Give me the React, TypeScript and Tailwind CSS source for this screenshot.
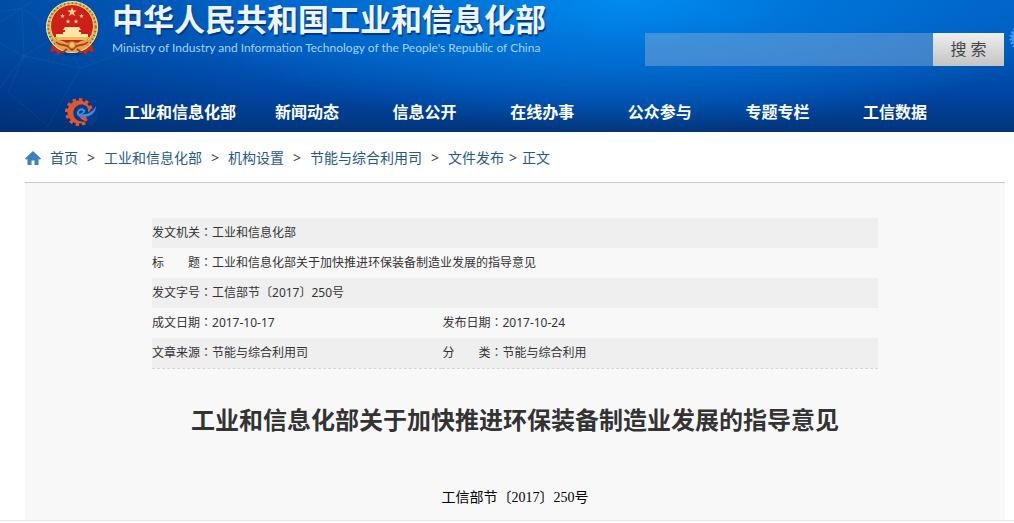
import { useState } from 'react'

const NAV_ITEMS = ['新闻动态', '信息公开', '在线办事', '公众参与', '专题专栏', '工信数据']

const CRUMBS = ['首页', '工业和信息化部', '机构设置', '节能与综合利用司', '文件发布']

interface MetaField {
  label: string
  value: string
}

const META_ROWS: MetaField[][] = [
  [{ label: '发文机关', value: '工业和信息化部' }],
  [{ label: '标　　题', value: '工业和信息化部关于加快推进环保装备制造业发展的指导意见' }],
  [{ label: '发文字号', value: '工信部节〔2017〕250号' }],
  [
    { label: '成文日期', value: '2017-10-17' },
    { label: '发布日期', value: '2017-10-24' },
  ],
  [
    { label: '文章来源', value: '节能与综合利用司' },
    { label: '分　　类', value: '节能与综合利用' },
  ],
]

const STAR = 'M0-1 .24-.31 .95-.31 .38.12 .59.81 0 .4-.59.81-.38.12-.95-.31-.24-.31Z'

function Emblem() {
  return (
    <svg viewBox="0 0 54 58" className="h-[58px] w-[54px] shrink-0" aria-hidden="true">
      <ellipse cx="27" cy="29" rx="26" ry="27" fill="#002f78" opacity=".45" />
      <path d="M8 42 5 52l6-1 2 4 7-6h14l7 6 2-4 6 1-3-10Z" fill="#c3271b" />
      <circle cx="27" cy="27" r="26" fill="#d8b45c" />
      <circle cx="27" cy="27" r="24" fill="none" stroke="#8f6a24" strokeWidth="2.5" strokeDasharray="1.5 2.5" />
      <circle cx="27" cy="27" r="25.4" fill="none" stroke="#f6e6a4" strokeWidth="1" />
      <circle cx="27" cy="26" r="21.5" fill="#cf1f1b" stroke="#f3d77c" strokeWidth="1" />
      <g fill="#ffd98a">
        <path d={STAR} transform="translate(27 12) scale(5)" />
        <path d={STAR} transform="translate(17.5 16) scale(2.6)" />
        <path d={STAR} transform="translate(36.5 16) scale(2.6)" />
        <path d={STAR} transform="translate(23 21.5) scale(2.6)" />
        <path d={STAR} transform="translate(31 21.5) scale(2.6)" />
      </g>
      <path d="M20 27h14l2 3H18ZM20 30h14v2H20ZM18 32h18v2H18ZM11 34h32v3H11Z" fill="#ffe6a6" />
      <path d="M9 37h36l-3 3H12Z" fill="#f0b95a" />
      <path d="M8 40c6-1 10 1 14 3l5-2 5 2c4-2 8-4 14-3-4 9-11 12-19 12S12 49 8 40Z" fill="#d9a94a" />
      <path d="M11 42c4 4 7 2 11 4s3 4 5 4 1-2 5-4 7 0 11-4" fill="none" stroke="#c3271b" strokeWidth="1.6" />
      <circle cx="27" cy="45" r="3.5" fill="#e8c468" stroke="#a4691d" strokeWidth="1" />
      <path d="M17 53l5-4M37 53l-5-4" stroke="#c3271b" strokeWidth="1.8" fill="none" />
    </svg>
  )
}

function GearLogo() {
  return (
    <svg viewBox="0 0 34 30" className="h-[30px] w-[34px] shrink-0" aria-hidden="true">
      <circle cx="15" cy="15" r="12.5" fill="none" stroke="#e2572b" strokeWidth="3" strokeDasharray="3.4 3.14" pathLength="78.5" />
      <circle cx="15" cy="15" r="11.5" fill="#e2572b" />
      {/* the "e" swirl cut out of the gear */}
      <path d="M34 12 20 18c3 2 4 5 3 7l4 5 7-8Z" fill="#053a8e" />
      <path d="M24 12c-1-4-7-6-11-3-5 3-5 11 0 14 3 2 7 2 10 1-3 0-7-2-8-5 8 2 14-1 17-9-3 2-5 4-8 5Z" fill="#053a8e" />
      <path d="M13 15c1-4 6-5 8-2 1 2-1 4-4 4 6 1 12-2 15-8 0 7-6 11-12 11-5 0-8-1-7-5Z" fill="#3c8fdc" />
      <path d="M15 16c0-3 3-3 4-2 0 1-1 2-2 2l-1 1Z" fill="#053a8e" />
    </svg>
  )
}

function HomeIcon() {
  return (
    <svg viewBox="0 0 16 14" className="h-[14px] w-4 shrink-0" aria-hidden="true">
      <path d="M8 0 16 7.5 14.8 8.7 13.5 7.7V14H9.5V9.5h-3V14h-4V7.7L1.2 8.7 0 7.5Z" fill="#3d80bd" />
    </svg>
  )
}

function HeaderBackdrop() {
  return (
    <div className="pointer-events-none absolute inset-0 overflow-hidden" aria-hidden="true">
      <svg viewBox="0 0 160 132" className="h-[132px] w-40" fill="none" stroke="#5aa2ea" opacity=".1">
        <path d="M0 22 22 8 60 34 24 56 0 88M22 8l2 48 56 12 80-28M24 56 8 92l40 34L80 68M0 12l22-4L40-4M24 56-6 40M80 68l-20-34" />
        <circle cx="24" cy="56" r="2" fill="#5aa2ea" />
      </svg>
      <svg viewBox="0 0 28 28" className="absolute top-[24px] -right-[23px] size-7">
        <circle cx="14" cy="14" r="12" fill="none" stroke="#3f97ee" strokeWidth="3" strokeDasharray="2 1.5" />
        <circle cx="14" cy="14" r="11.5" fill="#3f97ee" />
      </svg>
    </div>
  )
}

function MetaTable() {
  return (
    <table className="w-full table-fixed border-b border-dashed border-[#d6d6d6] text-xs text-[#333]">
      <colgroup>
        <col className="w-2/5" />
        <col className="w-3/5" />
      </colgroup>
      <tbody>
        {META_ROWS.map((row) => (
          <tr key={row[0].label} className="h-[30px] odd:bg-[#f0eff0]">
            {row.map((field) => (
              <td key={field.label} colSpan={row.length === 1 ? 2 : 1} className="px-0 pt-0 pb-px">
                {field.label}
                <span className="font-['Noto_Sans_CJK_TC',sans-serif]">：</span>
                {field.value}
              </td>
            ))}
          </tr>
        ))}
      </tbody>
    </table>
  )
}

export default function App() {
  const [keyword, setKeyword] = useState('')

  return (
    <div className="bg-white font-['Noto_Sans','Noto_Sans_CJK_SC',sans-serif]">
      {/* Header */}
      <header className="relative bg-[radial-gradient(ellipse_45%_100%_at_62%_0%,#008cf0_0%,#007be0cc_35%,#0060c000_100%),linear-gradient(to_bottom,#0060c4_0%,#0058ba_40%,#00439e_75%,#02357a_100%)]">
        <div className="absolute inset-0 bg-linear-to-r from-[#00225c]/30 to-transparent to-25%" />
        <HeaderBackdrop />

        <div className="relative flex items-start pr-[10px] pl-[45px]">
          <Emblem />
          <div className="ml-[13px] flex-1">
            <h1 className="text-[31px] leading-[38px] font-bold whitespace-nowrap text-[#eef4fc] text-shadow-[1px_2px_1px_#00377f]">
              中华人民共和国工业和信息化部
            </h1>
            <p className="font-[Lato,sans-serif] text-xs leading-5 whitespace-nowrap text-[#a5d2fa]">
              Ministry of Industry and Information Technology of the People's Republic of China
            </p>
          </div>
          <form className="mt-[33px] flex h-[33px]" onSubmit={(e) => e.preventDefault()}>
            <input
              type="text"
              aria-label="搜索"
              value={keyword}
              onChange={(e) => setKeyword(e.target.value)}
              className="w-72 bg-[#8fb0d8]/45 px-2 text-sm text-white outline-none"
            />
            <button
              type="submit"
              className="w-[71px] bg-linear-to-b from-[#eeeeee] to-[#c4c4c4] pb-[2px] text-base text-[#444]"
            >
              搜 索
            </button>
          </form>
        </div>

        <nav className="relative flex h-[66px] items-center pt-[26px] pr-[87px] pl-[64px] text-base font-bold text-white">
          <GearLogo />
          <a href="#" className="ml-[26px] whitespace-nowrap">工业和信息化部</a>
          <ul className="ml-[39px] flex flex-1 justify-between">
            {NAV_ITEMS.map((item) => (
              <li key={item}>
                <a href="#" className="whitespace-nowrap">{item}</a>
              </li>
            ))}
          </ul>
        </nav>
      </header>

      <main className="border-b border-[#e6e6e6] pr-[9px] pl-[25px]">
        {/* Breadcrumb */}
        <div className="flex h-[51px] items-center border-b border-[#c8c8c8] pt-[2px] text-sm whitespace-nowrap text-[#255a86]">
          <HomeIcon />
          <div className="ml-[9px] flex">
            {CRUMBS.map((crumb, i) => (
              <span key={crumb} className="flex">
                <a href="#">{crumb}</a>
                <span className={i < CRUMBS.length - 1 ? 'w-[26px] text-center text-[#444]' : 'w-[18px] text-center text-[#444]'}>
                  &gt;
                </span>
              </span>
            ))}
            <span>正文</span>
          </div>
        </div>

        {/* Document */}
        <article className="bg-[#f9f8f9] px-[127px] pt-[35px] pb-3">
          <MetaTable />
          <h2 className="mt-[31px] text-center text-2xl leading-10 font-bold whitespace-nowrap text-[#333]">
            工业和信息化部关于加快推进环保装备制造业发展的指导意见
          </h2>
          <p className="mt-12 text-center font-['Liberation_Serif','Noto_Sans_CJK_SC',serif] text-sm text-black">
            工信部节〔2017〕250号
          </p>
        </article>
      </main>
    </div>
  )
}
